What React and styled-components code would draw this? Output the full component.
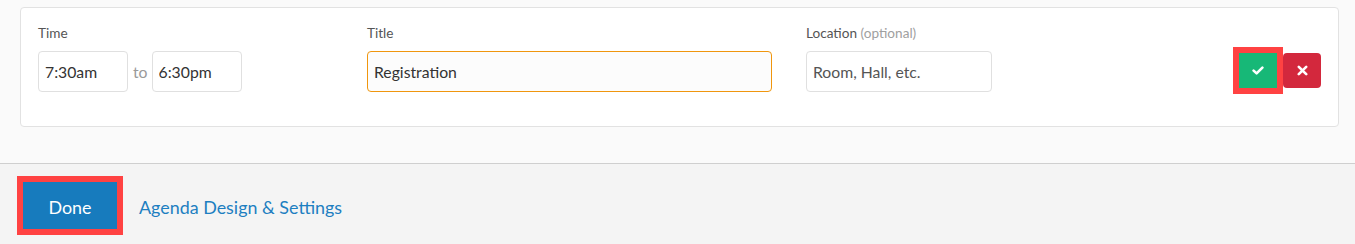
import React from "react";
import styled, { createGlobalStyle } from "styled-components";

const Global = createGlobalStyle`
  html, body { margin: 0; padding: 0; background: #fafafa; }
  body { font-family: Lato, "Open Sans", "Liberation Sans", sans-serif; }
  * { box-sizing: border-box; }
`;

const Page = styled.div`
  width: 1355px;
  height: 244px;
  display: flex;
  flex-direction: column;
  background: #fafafa;
`;

const Top = styled.div`
  padding: 7px 16px 36px 20px;
`;

const Card = styled.div`
  background: #fff;
  border: 1px solid #e2e2e2;
  border-radius: 4px;
  padding: 17px 17px 34px 17px;
  display: grid;
  grid-template-columns: 329px 439px 1fr auto;
  align-items: end;
`;

const Field = styled.div`
  display: flex;
  flex-direction: column;
`;

const Label = styled.label`
  font-size: 13.6px;
  line-height: 16px;
  color: #555;
  margin-bottom: 10px;
`;

const Optional = styled.span`
  color: #a0a0a0;
`;

const Row = styled.div`
  display: flex;
  align-items: center;
`;

const Input = styled.input`
  width: ${(p) => p.$w}px;
  height: 41px;
  border: 1px solid ${(p) => (p.$focus ? "#f0960e" : "#e0e0e0")};
  border-radius: 4px;
  background: ${(p) => (p.$focus ? "#fcfcfc" : "#fff")};
  padding: 0 6px;
  font-family: inherit;
  font-size: 15.75px;
  color: #333;
  outline: none;
  caret-color: #222;
  &::placeholder { color: #555; opacity: 1; }
`;

const To = styled.span`
  color: #9a9a9a;
  font-size: 15.75px;
  margin: 0 4px 0 5px;
`;

const Actions = styled.div`
  display: flex;
  gap: 6px;
  margin-bottom: 4px;
`;

const IconBtn = styled.button`
  width: 38px;
  height: 35px;
  border: none;
  border-radius: ${(p) => (p.$hl ? "0" : "4px")};
  background: ${(p) => p.$bg};
  display: flex;
  align-items: center;
  justify-content: center;
  padding: 0;
  outline: ${(p) => (p.$hl ? "6px solid #ff4242" : "none")};
  cursor: pointer;
`;

const Footer = styled.div`
  flex: 1;
  border-top: 1px solid #cfcfcf;
  background: #f4f4f4;
  padding: 18px 23px 0;
  display: flex;
  align-items: flex-start;
  gap: 22px;
`;

const DoneBtn = styled.button`
  width: 94px;
  height: 47px;
  border: none;
  border-radius: 0;
  background: #177bbd;
  color: #fff;
  font-family: inherit;
  font-size: 17.9px;
  padding: 3px 0 0;
  outline: 6px solid #ff4242;
  cursor: pointer;
`;

const Link = styled.a`
  color: #1d7fc1;
  font-size: 17.9px;
  line-height: 47px;
  padding-top: 2px;
  text-decoration: none;
`;

const Check = () => (
  <svg width="12" height="9" viewBox="0 0 12 9">
    <path d="M1.6 4.6 L4.6 7.4 L10.4 1.6" fill="none" stroke="#fff" strokeWidth="2.6" strokeLinecap="round" strokeLinejoin="round" />
  </svg>
);

const Cross = () => (
  <svg width="11" height="11" viewBox="0 0 11 11">
    <path d="M1.8 1.8 L9.2 9.2 M9.2 1.8 L1.8 9.2" fill="none" stroke="#fff" strokeWidth="2.6" strokeLinecap="round" />
  </svg>
);

export default function App() {
  return (
    <Page>
      <Global />
      <Top>
        <Card>
          <Field>
            <Label>Time</Label>
            <Row>
              <Input $w={90} defaultValue="7:30am" />
              <To>to</To>
              <Input $w={90} defaultValue="6:30pm" />
            </Row>
          </Field>
          <Field>
            <Label>Title</Label>
            <Input $w={405} $focus defaultValue="Registration" autoFocus />
          </Field>
          <Field>
            <Label>
              Location <Optional>(optional)</Optional>
            </Label>
            <Input $w={186} placeholder="Room, Hall, etc." />
          </Field>
          <Actions>
            <IconBtn $bg="#17b877" $hl aria-label="Save">
              <Check />
            </IconBtn>
            <IconBtn $bg="#d3283d" aria-label="Cancel">
              <Cross />
            </IconBtn>
          </Actions>
        </Card>
      </Top>
      <Footer>
        <DoneBtn>Done</DoneBtn>
        <Link href="#">Agenda Design &amp; Settings</Link>
      </Footer>
    </Page>
  );
}
